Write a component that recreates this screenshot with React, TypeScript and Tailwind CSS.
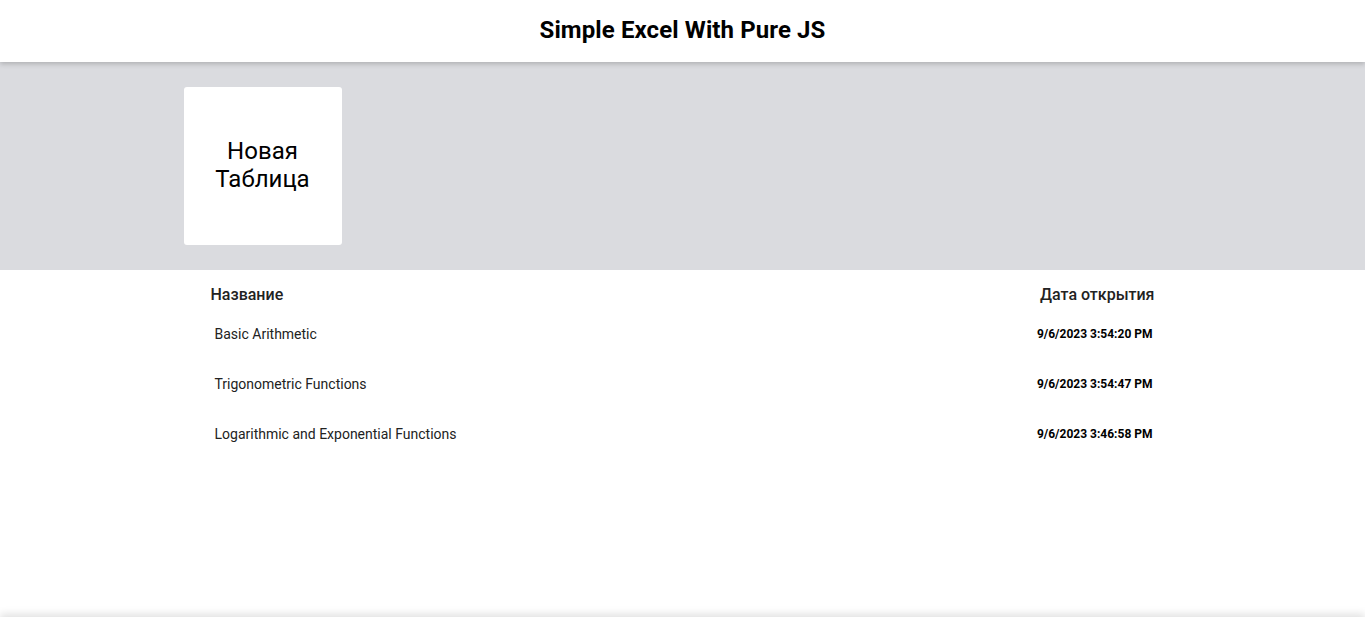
const files = [
  { name: "Basic Arithmetic", date: "9/6/2023 3:54:20 PM" },
  { name: "Trigonometric Functions", date: "9/6/2023 3:54:47 PM" },
  { name: "Logarithmic and Exponential Functions", date: "9/6/2023 3:46:58 PM" },
];

export default function App() {
  return (
    <div className="min-h-screen bg-white font-['Roboto',sans-serif] text-black">
      {/* Header */}
      <header className="relative z-10 h-[62px] pb-[3px] flex items-center justify-center bg-white shadow-[0_2px_5px_rgba(0,0,0,0.2)]">
        <h1 className="text-[24px] font-bold tracking-[0.1px]">Simple Excel With Pure JS</h1>
      </header>

      {/* New table */}
      <section className="h-[208px] bg-[#dadbdf] pt-[25px]">
        <div className="w-[1000px] mx-auto pl-[1px]">
          <button className="w-[158px] h-[158px] bg-white rounded-[3px] flex items-center justify-center text-[24px] leading-[28px] text-center pb-[2px]">
            Новая
            <br />
            Таблица
          </button>
        </div>
      </section>

      {/* List */}
      <section className="w-[944px] mx-auto pt-[15px] pb-[158px]">
        <div className="flex justify-between text-[16px] font-medium text-[#222] leading-[20px]">
          <span>Название</span>
          <span>Дата открытия</span>
        </div>
        <ul className="mt-[4px]">
          {files.map((f) => (
            <li key={f.name} className="flex items-center justify-between h-[50px] pl-[4px] pr-[2px]">
              <span className="text-[14px] text-[#222]">{f.name}</span>
              <span className="text-[12px] font-bold">{f.date}</span>
            </li>
          ))}
        </ul>
      </section>

      <footer className="h-[60px] shadow-[0_-3px_8px_rgba(0,0,0,0.12)]" />
    </div>
  );
}
